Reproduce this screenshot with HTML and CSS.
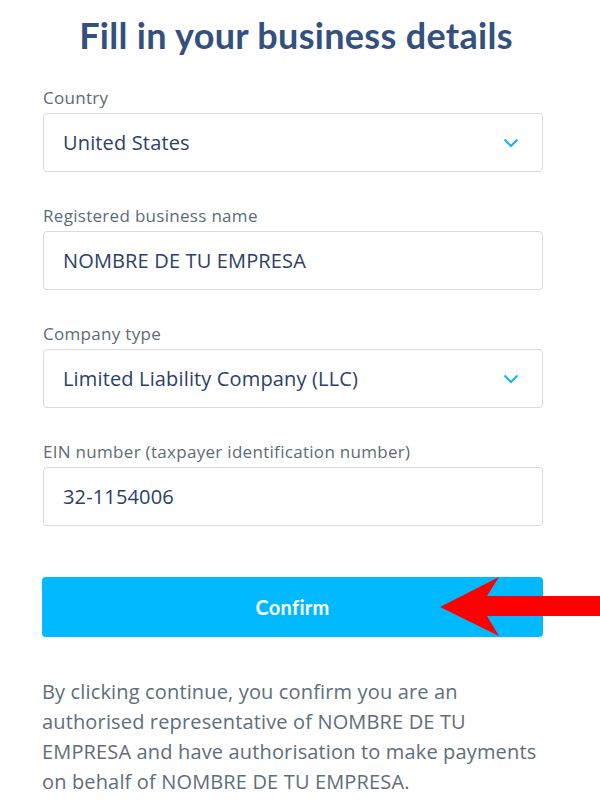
FILE: index.html
```html
<!DOCTYPE html>
<html>
<head>
<meta charset="utf-8">
<link rel="stylesheet" href="styles.css">
</head>
<body>
<div class="page">
  <h1 class="title">Fill in your business details</h1>
  <form class="form">
    <div class="field">
      <label class="label">Country</label>
      <div class="box select"><span>United States</span>
        <svg class="chev" width="16" height="10" viewBox="0 0 16 10"><path d="M1.5 1.5 L8 8 L14.5 1.5" fill="none" stroke="#17b3f2" stroke-width="2"/></svg>
      </div>
    </div>
    <div class="field">
      <label class="label">Registered business name</label>
      <div class="box"><span>NOMBRE DE TU EMPRESA</span></div>
    </div>
    <div class="field">
      <label class="label">Company type</label>
      <div class="box select"><span>Limited Liability Company (LLC)</span>
        <svg class="chev" width="16" height="10" viewBox="0 0 16 10"><path d="M1.5 1.5 L8 8 L14.5 1.5" fill="none" stroke="#17b3f2" stroke-width="2"/></svg>
      </div>
    </div>
    <div class="field">
      <label class="label">EIN number (taxpayer identification number)</label>
      <div class="box"><span>32-1154006</span></div>
    </div>
    <div class="btnwrap">
      <button type="button" class="confirm">Confirm</button>
      <svg class="arrow" width="160" height="60" viewBox="0 0 160 60"><polygon points="0,30 59,0 47,19 160,19 160,39 47,39 59,59" fill="#ff0000"/></svg>
    </div>
    <p class="note">By clicking continue, you confirm you are an<br>authorised representative of NOMBRE DE TU<br>EMPRESA and have authorisation to make payments<br>on behalf of NOMBRE DE TU EMPRESA.</p>
  </form>
</div>
</body>
</html>
```
FILE: styles.css
```css
html, body { margin: 0; padding: 0; background: #fff; }
body { font-family: "Open Sans", Lato, sans-serif; overflow: hidden; }
.page { width: 600px; }
.title {
  margin: 0;
  padding: 13px 8px 0 0;
  text-align: center;
  font-family: Lato, sans-serif;
  font-size: 36px;
  line-height: 44px;
  font-weight: 700;
  letter-spacing: 0.3px;
  color: #33507e;
}
.form { padding: 0 57px 0 43px; margin-top: 31px; }
.field { margin-bottom: 34px; }
.label {
  display: block;
  font-size: 17px;
  line-height: 20px;
  letter-spacing: 0.3px;
  color: #5c6b78;
  margin-bottom: 5px;
}
.box {
  height: 57px;
  border: 1px solid #d6dbe0;
  border-radius: 4px;
  display: flex;
  align-items: center;
  justify-content: space-between;
  padding: 0 20px 0 19px;
  font-size: 20px;
  letter-spacing: 0.15px;
  color: #2c4167;
}
.chev { margin-right: 3px; }
.btnwrap { position: relative; margin-top: 51px; margin-left: -1px; }
.confirm {
  display: block;
  width: 501px;
  height: 60px;
  border: none;
  border-radius: 4px;
  background: #00b9ff;
  color: #fff;
  font-family: Lato, sans-serif;
  font-weight: 700;
  font-size: 20px;
  letter-spacing: 0.3px;
}
.arrow { position: absolute; left: 398px; top: 0; }
.note {
  margin: 40px 0 0 -1px;
  font-size: 20px;
  line-height: 30px;
  letter-spacing: 0.15px;
  color: #5e6e7b;
  width: 530px;
}
```
